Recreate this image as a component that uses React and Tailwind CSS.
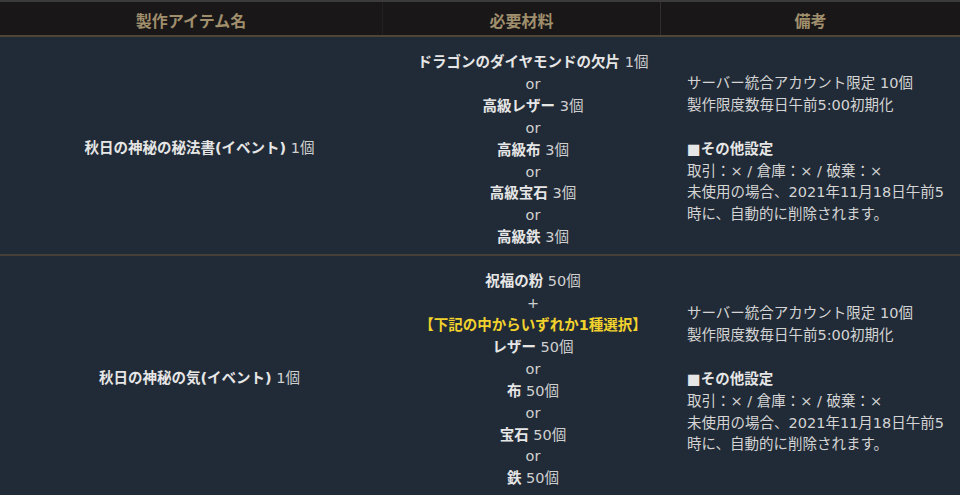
import React from "react";

const font = { fontFamily: '"DejaVu Sans", "Noto Sans CJK JP", sans-serif' };

function Item({ name, qty }) {
  return (
    <div>
      <span className="font-bold text-[#e6e6e6]">{name}</span>
      <span className="text-[#d0d0d0]"> {qty}</span>
    </div>
  );
}

function Or({ t = "or" }) {
  return <div className="text-[#d0d0d0]">{t}</div>;
}

function Remarks() {
  return (
    <div className="text-[#d4d4d4]">
      <div>サーバー統合アカウント限定 10個</div>
      <div>製作限度数毎日午前5:00初期化</div>
      <div>&nbsp;</div>
      <div className="font-bold text-[#e6e6e6]">■その他設定</div>
      <div>取引：× / 倉庫：× / 破棄：×</div>
      <div>未使用の場合、2021年11月18日午前5</div>
      <div>時に、自動的に削除されます。</div>
    </div>
  );
}

export default function App() {
  const rows = [
    {
      name: "秋日の神秘の秘法書(イベント)",
      mats: (
        <>
          <Item name="ドラゴンのダイヤモンドの欠片" qty="1個" />
          <Or />
          <Item name="高級レザー" qty="3個" />
          <Or />
          <Item name="高級布" qty="3個" />
          <Or />
          <Item name="高級宝石" qty="3個" />
          <Or />
          <Item name="高級鉄" qty="3個" />
        </>
      ),
    },
    {
      name: "秋日の神秘の気(イベント)",
      mats: (
        <>
          <Item name="祝福の粉" qty="50個" />
          <Or t="+" />
          <div className="font-bold text-[#f2d22c]">【下記の中からいずれか1種選択】</div>
          <Item name="レザー" qty="50個" />
          <Or />
          <Item name="布" qty="50個" />
          <Or />
          <Item name="宝石" qty="50個" />
          <Or />
          <Item name="鉄" qty="50個" />
        </>
      ),
    },
  ];

  return (
    <div className="w-[960px] h-[495px] overflow-hidden bg-[#212b37] text-[14.5px] leading-[21.9px]" style={font}>
      <div className="flex h-[37px] bg-[#191718] border-t-2 border-t-[#3b3b3b] border-b-2 border-b-[#4d4535] font-bold text-[16px] text-[#a08f6c]">
        <div className="w-[383px] flex items-center justify-center pt-[7px] border-r border-r-[#222]">製作アイテム名</div>
        <div className="w-[278px] flex items-center justify-center pt-[7px] border-r border-r-[#303030]">必要材料</div>
        <div className="flex-1 flex items-center justify-center pt-[7px]">備考</div>
      </div>
      {rows.map((r, i) => (
        <div key={i} className={`flex ${i === 0 ? "border-b-2 border-b-[#463f38]" : ""}`}>
          <div className="w-[383px] flex items-center justify-center pl-[16px] pt-[7px]">
            <Item name={r.name} qty="1個" />
          </div>
          <div className="w-[278px] flex flex-col items-center text-center pl-[22px] pt-[15px] pb-[5px]">
            {r.mats}
          </div>
          <div className="flex-1 flex items-center pl-[26px] pt-[8px]">
            <Remarks />
          </div>
        </div>
      ))}
    </div>
  );
}
